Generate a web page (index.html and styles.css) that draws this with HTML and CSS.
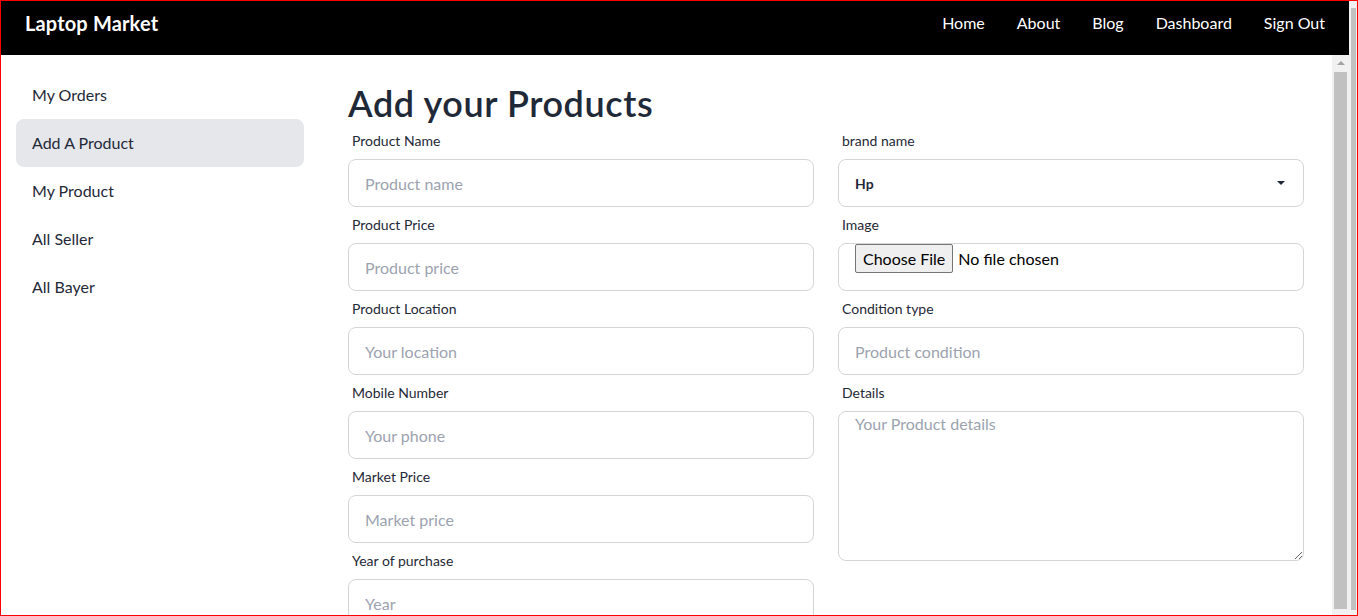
FILE: index.html
```html
<!DOCTYPE html>
<html lang="en">
<head>
<meta charset="utf-8">
<title>Laptop Market</title>
<link rel="stylesheet" href="styles.css">
</head>
<body>
<div class="frame">
  <div class="app">
    <header class="navbar">
      <a class="brand" href="#">Laptop Market</a>
      <nav class="links">
        <a href="#">Home</a>
        <a href="#">About</a>
        <a href="#">Blog</a>
        <a href="#">Dashboard</a>
        <a href="#">Sign Out</a>
      </nav>
    </header>
    <div class="content">
      <aside class="sidebar">
        <ul class="menu">
          <li><a href="#">My Orders</a></li>
          <li><a href="#" class="active">Add A Product</a></li>
          <li><a href="#">My Product</a></li>
          <li><a href="#">All Seller</a></li>
          <li><a href="#">All Bayer</a></li>
        </ul>
      </aside>
      <main class="main">
        <h1 class="title">Add your Products</h1>
        <form class="form">
          <div class="col">
            <div class="field">
              <label class="label">Product Name</label>
              <input class="input" type="text" placeholder="Product name">
            </div>
            <div class="field">
              <label class="label">Product Price</label>
              <input class="input" type="text" placeholder="Product price">
            </div>
            <div class="field">
              <label class="label">Product Location</label>
              <input class="input" type="text" placeholder="Your location">
            </div>
            <div class="field">
              <label class="label">Mobile Number</label>
              <input class="input" type="text" placeholder="Your phone">
            </div>
            <div class="field">
              <label class="label">Market Price</label>
              <input class="input" type="text" placeholder="Market price">
            </div>
            <div class="field">
              <label class="label">Year of purchase</label>
              <input class="input" type="text" placeholder="Year">
            </div>
          </div>
          <div class="col">
            <div class="field">
              <label class="label">brand name</label>
              <div class="select"><span class="select-value">Hp</span><span class="caret"></span></div>
            </div>
            <div class="field">
              <label class="label">Image</label>
              <div class="file"><span class="file-btn">Choose File</span><span class="file-text">No file chosen</span></div>
            </div>
            <div class="field">
              <label class="label">Condition type</label>
              <input class="input" type="text" placeholder="Product condition">
            </div>
            <div class="field">
              <label class="label">Details</label>
              <textarea class="textarea" placeholder="Your Product details"></textarea>
            </div>
          </div>
        </form>
      </main>
      <div class="vscroll">
        <span class="vscroll-up"></span>
        <div class="vscroll-thumb"></div>
      </div>
    </div>
  </div>
  <div class="outer-scroll">
    <div class="outer-thumb"></div>
  </div>
</div>
</body>
</html>
```

FILE: styles.css
```css
* { box-sizing: border-box; }
html, body {
  margin: 0;
  padding: 0;
  height: 100%;
  overflow: hidden;
  background: #fff;
}
body {
  font-family: Lato, "Open Sans", Arial, sans-serif;
  color: #1f2937;
}
.frame {
  width: 1358px;
  height: 616px;
  border: 1px solid #ff0000;
  display: flex;
  overflow: hidden;
}
.app {
  width: 1348px;
  display: flex;
  flex-direction: column;
  min-height: 0;
}
.navbar {
  height: 54px;
  flex: none;
  background: #000;
  display: flex;
  align-items: center;
  justify-content: space-between;
  padding: 0 8px 11px 8px;
}
.brand {
  color: #fff;
  text-decoration: none;
  font-size: 20px;
  font-weight: 700;
  padding: 0 16px;
  letter-spacing: 0.15px;
}
.links { display: flex; }
.links a {
  color: #fff;
  text-decoration: none;
  font-size: 16px;
  padding: 0 16px;
}
.content {
  flex: 1;
  min-height: 0;
  display: flex;
  overflow: hidden;
}
.sidebar {
  width: 303px;
  flex: none;
  padding: 16px 0 0 15px;
}
.menu {
  list-style: none;
  margin: 0;
  padding: 0;
}
.menu a {
  display: flex;
  align-items: center;
  height: 48px;
  padding: 0 16px 2px;
  border-radius: 8px;
  color: #1f2937;
  text-decoration: none;
  font-size: 16px;
}
.menu a.active { background: #e5e7eb; }
.main {
  flex: 1;
  padding: 28px 0 0 44px;
  min-width: 0;
}
.title {
  margin: 0;
  font-size: 36px;
  line-height: 40px;
  font-weight: 600;
  letter-spacing: 0.6px;
  color: #1f2937;
}
.form {
  display: grid;
  grid-template-columns: 466px 466px;
  column-gap: 24px;
  align-items: start;
}
.col { display: flex; flex-direction: column; }
.field { display: flex; flex-direction: column; }
.label {
  height: 36px;
  display: flex;
  align-items: center;
  padding: 0 4px 2px;
  font-size: 14px;
  color: #1f2937;
}
.input, .select, .file, .textarea {
  width: 466px;
  border: 1px solid #d4d5d8;
  border-radius: 8px;
  background: #fff;
  font-family: inherit;
  font-size: 16px;
  color: #1f2937;
}
.input {
  height: 48px;
  padding: 0 16px;
  outline: none;
}
.input::placeholder, .textarea::placeholder { color: #9ca3af; }
.select {
  height: 48px;
  display: flex;
  align-items: center;
  justify-content: space-between;
  padding: 0 18px 0 16px;
}
.select-value { font-size: 14px; font-weight: 700; }
.caret {
  width: 0;
  height: 0;
  border-left: 4px solid transparent;
  border-right: 4px solid transparent;
  border-top: 4px solid #1f2937;
}
.file {
  height: 48px;
  display: flex;
  align-items: flex-start;
  padding: 0 16px;
}
.file-btn {
  background: #efefef;
  border: 1px solid #767676;
  border-radius: 2px;
  padding: 1px 7px;
  line-height: 25px;
  color: #000;
}
.file-text {
  margin-left: 5px;
  line-height: 29px;
  color: #000;
}
.textarea {
  height: 150px;
  padding: 0 16px;
  line-height: 24px;
  resize: vertical;
  outline: none;
}
.vscroll {
  width: 17px;
  flex: none;
  background: #f1f1f1;
  display: flex;
  flex-direction: column;
  align-items: center;
}
.vscroll-up {
  margin-top: 6px;
  width: 0;
  height: 0;
  border-left: 4px solid transparent;
  border-right: 4px solid transparent;
  border-bottom: 4px solid #a3a3a3;
}
.vscroll-thumb {
  margin-top: 7px;
  width: 13px;
  flex: 1;
  margin-bottom: 6px;
  background: #c1c1c1;
}
.outer-scroll {
  width: 8px;
  flex: none;
  background: #f1f1f1;
  padding: 7px 1px 5px 2px;
  display: flex;
}
.outer-thumb {
  flex: 1;
  background: #c1c1c1;
}
```
